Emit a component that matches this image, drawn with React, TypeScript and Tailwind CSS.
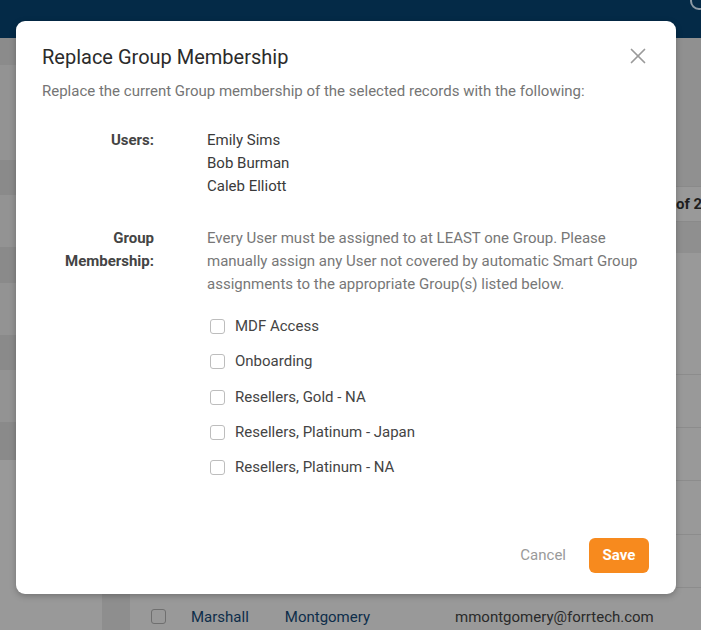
import { X } from "lucide-react";

const groups = [
  "MDF Access",
  "Onboarding",
  "Resellers, Gold - NA",
  "Resellers, Platinum - Japan",
  "Resellers, Platinum - NA",
];

const users = ["Emily Sims", "Bob Burman", "Caleb Elliott"];

const sideRows = [
  { h: "h-[27px]", bg: "bg-[#8b8b8b]" },
  { h: "h-[95px]", bg: "bg-[#939393]" },
  { h: "h-[35px]", bg: "bg-[#8a8a8a]" },
  { h: "h-[52px]", bg: "bg-[#939393]" },
  { h: "h-[36px]", bg: "bg-[#8a8a8a]" },
  { h: "h-[52px]", bg: "bg-[#939393]" },
  { h: "h-[35px]", bg: "bg-[#8a8a8a]" },
  { h: "h-[52px]", bg: "bg-[#939393]" },
  { h: "h-[38px]", bg: "bg-[#8a8a8a]" },
];

const Background = () => (
  <div className="flex h-[630px] w-[701px] flex-col overflow-hidden bg-[#999999]">
    <div className="relative h-[38px] shrink-0 bg-[#042a47]">
      <div className="absolute -top-[8px] left-[690px] h-[18px] w-[18px] rounded-full border-2 border-[#8d9aa5]" />
    </div>
    <div className="flex flex-1">
      <div className="flex w-[102px] shrink-0 flex-col">
        {sideRows.map((r, i) => (
          <div key={i} className={`${r.h} ${r.bg}`} />
        ))}
      </div>
      <div className="w-[28px] shrink-0 bg-[#8e8e8e]" />
      <div className="flex min-w-0 flex-1 flex-col">
        <div className="h-[148px] bg-[#909090]" />
        <div className="flex h-[36px] items-center whitespace-nowrap border-y border-[#8a8a8a] bg-[#999999] pl-[546px] text-[15px] font-bold text-[#1e1e1e]">
          of 250
        </div>
        <div className="h-[31px] bg-[#8f8f8f]" />
        <div className="h-[122px] border-b border-[#8c8c8c]" />
        <div className="h-[53px] border-b border-[#8c8c8c]" />
        <div className="h-[53px] border-b border-[#8c8c8c]" />
        <div className="h-[54px] border-b border-[#8c8c8c]" />
        <div className="h-[53px] border-b border-[#8c8c8c]" />
        <div className="flex h-[53px] items-start pt-[20px] text-[15px] whitespace-nowrap">
          <div className="ml-[21px] mt-[1px] h-[15px] w-[15px] rounded-[3px] border border-[#6f6f6f]" />
          <span className="ml-[25px] leading-[18px] text-[#0d2d4a]">Marshall</span>
          <span className="ml-[36px] leading-[18px] text-[#0d2d4a]">Montgomery</span>
          <span className="ml-[85px] leading-[18px] text-[#2a2a2a]">mmontgomery@forrtech.com</span>
        </div>
      </div>
    </div>
  </div>
);

export default function App() {
  return (
    <div className="relative h-[630px] w-[701px] overflow-hidden font-['Roboto',sans-serif]">
      <Background />
      <div className="absolute left-[16px] top-[21px] flex h-[573px] w-[660px] flex-col rounded-[9px] bg-white pl-[26px] pr-[27px] shadow-[0_2px_6px_rgba(0,0,0,0.25)]">
        <button className="absolute right-[25px] top-[22px] flex text-[#9a9a9a]">
          <X size={26} strokeWidth={1.6} />
        </button>
        <h2 className="mt-[22px] text-[20px] leading-[28px] text-[#2b2b2b]">Replace Group Membership</h2>
        <p className="mt-[9px] text-[15px] leading-[22px] text-[#757575]">
          Replace the current Group membership of the selected records with the following:
        </p>

        <div className="mt-[27px] grid grid-cols-[112px_1fr] gap-x-[53px] gap-y-[29px] text-[15px] leading-[23px]">
          <div className="text-right font-bold text-[#444]">Users:</div>
          <div className="text-[#3a3a3a]">
            {users.map((u) => (
              <div key={u}>{u}</div>
            ))}
          </div>

          <div className="text-right font-bold text-[#444]">
            Group
            <br />
            Membership:
          </div>
          <div>
            <p className="w-[445px] text-[#777]">
              Every User must be assigned to at LEAST one Group. Please manually assign any User not
              covered by automatic Smart Group assignments to the appropriate Group(s) listed below.
            </p>
            <div className="mt-[13px] flex flex-col">
              {groups.map((g) => (
                <label key={g} className="flex h-[35.3px] items-center gap-[10px] pl-[3px] text-[#444]">
                  <span className="h-[15px] w-[15px] rounded-[3px] border border-[#bdbdbd] bg-white" />
                  {g}
                </label>
              ))}
            </div>
          </div>
        </div>

        <div className="mb-[21px] mt-auto flex items-center justify-end gap-[23px]">
          <button className="text-[15px] text-[#9a9a9a]">Cancel</button>
          <button className="h-[35px] w-[60px] rounded-[6px] bg-[#f78a1e] text-[15px] font-bold text-white">
            Save
          </button>
        </div>
      </div>
    </div>
  );
}
